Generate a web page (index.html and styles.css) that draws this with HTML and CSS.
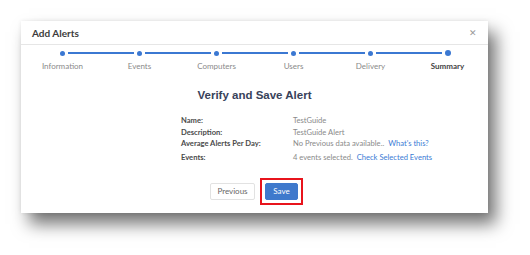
FILE: index.html
```html
<!DOCTYPE html>
<html>
<head>
  <title>Add Alerts</title>
  <link rel="stylesheet" href="styles.css">
</head>
<body>
  <div class="dialog">
    <div class="dialog-header">
      <span class="dialog-title">Add Alerts</span>
      <span class="close">&#x2715;</span>
    </div>

    <div class="stepper">
      <div class="step first"><div class="track"><i></i><b></b><i></i></div><span>Information</span></div>
      <div class="step"><div class="track"><i></i><b></b><i></i></div><span>Events</span></div>
      <div class="step"><div class="track"><i></i><b></b><i></i></div><span>Computers</span></div>
      <div class="step"><div class="track"><i></i><b></b><i></i></div><span>Users</span></div>
      <div class="step"><div class="track"><i></i><b></b><i></i></div><span>Delivery</span></div>
      <div class="step last current"><div class="track"><i></i><b></b><i></i></div><span>Summary</span></div>
    </div>

    <h2>Verify and Save Alert</h2>

    <div class="summary">
      <div class="label">Name:</div>
      <div class="value">TestGuide</div>
      <div class="label">Description:</div>
      <div class="value">TestGuide Alert</div>
      <div class="label">Average Alerts Per Day:</div>
      <div class="value">No Previous data available.. <a href="#">What's this?</a></div>
      <div class="label gap">Events:</div>
      <div class="value gap">4 events selected. <a href="#">Check Selected Events</a></div>
    </div>

    <div class="actions">
      <button class="btn">Previous</button>
      <span class="highlight"><button class="btn primary">Save</button></span>
    </div>
  </div>
</body>
</html>
```

FILE: styles.css
```css
html, body {
  height: 100%;
}
body {
  margin: 0;
  padding-top: 21px;
  box-sizing: border-box;
  background: #fff;
  font-family: Lato, 'Open Sans', sans-serif;
  color: #444;
}
.dialog {
  margin-left: 21px;
  width: 467px;
  height: 192px;
  background: #fff;
  box-shadow: 0 0 4px rgba(0,0,0,0.08), 8px 11px 16px rgba(0,0,0,0.55);
  display: flex;
  flex-direction: column;
}
.dialog-header {
  height: 23px;
  border-bottom: 1px solid #e6e6e6;
  display: flex;
  align-items: center;
  justify-content: space-between;
  padding: 0 11px 0 11px;
}
.dialog-title {
  font-size: 10px;
  font-weight: 700;
  color: #3c3c3c;
}
.close {
  font-size: 9px;
  color: #999;
}
.stepper {
  display: grid;
  grid-template-columns: repeat(6, 77px);
  padding: 5px 2px 0 3px;
}
.step {
  display: flex;
  flex-direction: column;
  align-items: center;
}
.track {
  display: flex;
  align-items: center;
  width: 100%;
  height: 6px;
}
.track i {
  flex: 1;
  height: 2px;
  background: #3b78d2;
}
.track i:first-child { margin-right: 3px; }
.track i:last-child { margin-left: 3px; }
.step.first .track i:first-child,
.step.last .track i:last-child {
  background: transparent;
}
.track b {
  width: 5px;
  height: 5px;
  border-radius: 50%;
  background: #3b78d2;
}
.step.current .track b {
  width: 6px;
  height: 6px;
}
.step span {
  margin-top: 4px;
  font-size: 8px;
  line-height: 12px;
  color: #8a8a8a;
}
.step.current span {
  color: #444;
  font-weight: 700;
}
h2 {
  margin: 15px 0 0 0;
  text-align: center;
  font-family: 'Liberation Sans', Arial, sans-serif;
  font-size: 11.5px;
  line-height: 16px;
  color: #38425a;
}
.summary {
  display: grid;
  grid-template-columns: 112px auto;
  margin: 12px 0 0 160px;
  font-size: 7.6px;
  line-height: 11.5px;
}
.label {
  color: #4a4a4a;
  font-weight: 700;
}
.value {
  color: #8a8a8a;
}
.gap {
  margin-top: 2.5px;
}
.value a {
  color: #3a7bd5;
  text-decoration: none;
  margin-left: 2px;
}
.actions {
  display: flex;
  justify-content: center;
  align-items: center;
  gap: 5px;
  margin: 14px 0 0 4px;
}
.highlight {
  display: flex;
  padding: 3px;
  border: 2px solid #e8141c;
}
.btn {
  height: 17px;
  width: 45px;
  padding: 0;
  border: 1px solid #e2e2e2;
  border-radius: 2px;
  background: #fff;
  color: #666;
  font-family: Lato, 'Open Sans', sans-serif;
  font-size: 8px;
}
.btn.primary {
  width: 33px;
  background: #3f79cc;
  border-color: #3f79cc;
  color: #fff;
}
```
